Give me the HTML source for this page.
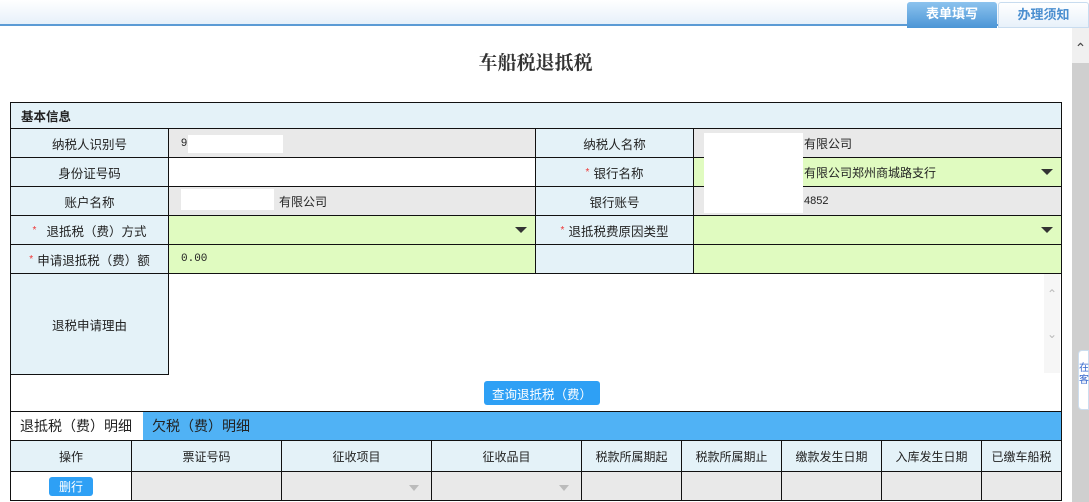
<!DOCTYPE html>
<html><head><meta charset="utf-8"><style>
*{box-sizing:border-box;margin:0;padding:0}
body{width:1089px;height:502px;overflow:hidden;background:#fff;font-family:"Liberation Sans","Noto Sans CJK SC",sans-serif;font-size:12px;color:#222;position:relative}
.abs{position:absolute}
.top{left:0;top:0;width:1089px;height:26px;background:linear-gradient(#fff,#e6f0fa);border-bottom:2px solid #5b9bd5}
.tab{top:2px;height:26px;line-height:24px;text-align:center;font-size:13px;font-weight:bold;border-radius:3px 3px 0 0}
.sb{left:1072px;top:28px;width:17px;height:474px;background:#cfcfcf}
.cell{position:absolute;border:1px solid #111;display:flex;align-items:center}
.lab{background:#e4f2f8;justify-content:center;font-size:12.5px}
.g{background:#e9e9e9}.gr{background:#e0fbc0}.w{background:#fff}
.st{color:#e33;font-size:10px;margin-right:4px}
.tri{position:absolute;right:8px;width:0;height:0;border-left:6px solid transparent;border-right:6px solid transparent;border-top:6px solid #333}
.wb{position:absolute;background:#fff}
.hd{background:#e4f2f8;justify-content:center;font-size:12px}
.btn{background:#2ea0f5;color:#fff;border-radius:3px;display:flex;align-items:center;justify-content:center}
</style></head><body>
<div class="abs top"></div>
<div class="abs tab" style="left:907px;width:90px;background:linear-gradient(#8cc3ee,#4b95d6);color:#fff">表单填写</div>
<div class="abs tab" style="left:998px;width:91px;background:linear-gradient(#fff,#e8f1fa);color:#4b8fd0;border:1px solid #c8dcef">办理须知</div>
<div class="abs sb"><div style="height:35px;background:#f0f0f0;text-align:center;font-size:14px;color:#444;line-height:40px">⌃</div></div>
<div class="abs" style="left:1078px;top:350px;width:11px;height:60px;background:#fff;border:1px solid #cde;border-radius:4px 0 0 4px;font-size:10px;color:#36c;line-height:12px;padding-top:12px">在客</div>
<div class="abs" style="left:0;top:48px;width:1071px;text-align:center;font-size:19px;font-weight:bold;color:#333;font-family:'Noto Serif CJK SC',serif">车船税退抵税</div>

<div class="cell" style="left:10px;top:102px;width:1052px;height:27px;background:#e4f2f8;padding-left:10px;font-weight:bold;font-size:12.5px">基本信息</div>

<div class="cell lab" style="left:10px;top:128px;width:159px;height:30px">纳税人识别号</div>
<div class="cell g" style="left:168px;top:128px;width:368px;height:30px;padding-left:12px;font-size:11px">91<span class="wb" style="left:19px;top:6px;width:95px;height:18px"></span></div>
<div class="cell lab" style="left:535px;top:128px;width:159px;height:30px">纳税人名称</div>
<div class="cell g" style="left:693px;top:128px;width:369px;height:30px;padding-left:110px">有限公司</div>

<div class="cell lab" style="left:10px;top:157px;width:159px;height:30px">身份证号码</div>
<div class="cell w" style="left:168px;top:157px;width:368px;height:30px"></div>
<div class="cell lab" style="left:535px;top:157px;width:159px;height:30px"><span class="st">*</span>银行名称</div>
<div class="cell gr" style="left:693px;top:157px;width:369px;height:30px;padding-left:110px">有限公司郑州商城路支行<span class="tri"></span></div>

<div class="cell lab" style="left:10px;top:186px;width:159px;height:30px">账户名称</div>
<div class="cell g" style="left:168px;top:186px;width:368px;height:30px;padding-left:110px">有限公司<span class="wb" style="left:12px;top:2px;width:93px;height:21px"></span></div>
<div class="cell lab" style="left:535px;top:186px;width:159px;height:30px">银行账号</div>
<div class="cell g" style="left:693px;top:186px;width:369px;height:30px;padding-left:110px;font-size:11px">4852</div>

<div class="cell lab" style="left:10px;top:215px;width:159px;height:30px"><span class="st" style="margin-right:10px">*</span>退抵税（费）方式</div>
<div class="cell gr" style="left:168px;top:215px;width:368px;height:30px"><span class="tri"></span></div>
<div class="cell lab" style="left:535px;top:215px;width:159px;height:30px"><span class="st">*</span>退抵税费原因类型</div>
<div class="cell gr" style="left:693px;top:215px;width:369px;height:30px"><span class="tri"></span></div>

<div class="cell lab" style="left:10px;top:244px;width:159px;height:30px"><span class="st">*</span>申请退抵税（费）额</div>
<div class="cell gr" style="left:168px;top:244px;width:368px;height:30px;padding-left:12px;font-size:11px;font-family:'Liberation Mono',monospace">0.00</div>
<div class="cell lab" style="left:535px;top:244px;width:159px;height:30px"></div>
<div class="cell gr" style="left:693px;top:244px;width:369px;height:30px"></div>

<div class="wb" style="left:704px;top:133px;width:99px;height:80px"></div>

<div class="abs" style="left:10px;top:273px;width:1052px;height:139px;border-left:1px solid #111;border-right:1px solid #111"></div>
<div class="cell lab" style="left:10px;top:273px;width:159px;height:102px">退税申请理由</div>
<div class="abs" style="left:1044px;top:274px;width:16px;height:99px;background:#f6f6f6;color:#bbb;font-size:12px;text-align:center;line-height:40px">⌃<br>⌄</div>
<div class="abs btn" style="left:484px;top:381px;width:116px;height:24px;font-size:12.5px">查询退抵税（费）</div>

<div class="abs" style="left:10px;top:411px;width:1052px;height:30px;background:#50b2f5;border:1px solid #111;border-bottom:none"></div>
<div class="abs" style="left:11px;top:412px;width:132px;height:29px;background:#fff;font-size:14px;line-height:29px;padding-left:9px">退抵税（费）明细</div>
<div class="abs" style="left:152px;top:412px;font-size:14px;line-height:29px">欠税（费）明细</div>

<div class="cell hd" style="left:10px;top:440px;width:122px;height:32px">操作</div>
<div class="cell hd" style="left:131px;top:440px;width:151px;height:32px">票证号码</div>
<div class="cell hd" style="left:281px;top:440px;width:151px;height:32px">征收项目</div>
<div class="cell hd" style="left:431px;top:440px;width:151px;height:32px">征收品目</div>
<div class="cell hd" style="left:581px;top:440px;width:101px;height:32px">税款所属期起</div>
<div class="cell hd" style="left:681px;top:440px;width:101px;height:32px">税款所属期止</div>
<div class="cell hd" style="left:781px;top:440px;width:101px;height:32px">缴款发生日期</div>
<div class="cell hd" style="left:881px;top:440px;width:101px;height:32px">入库发生日期</div>
<div class="cell hd" style="left:981px;top:440px;width:81px;height:32px;overflow:hidden;white-space:nowrap">已缴车船税</div>

<div class="cell w" style="left:10px;top:471px;width:122px;height:30px;justify-content:center"><span class="btn" style="width:44px;height:19px;font-size:12px">删行</span></div>
<div class="cell g" style="left:131px;top:471px;width:151px;height:30px"></div>
<div class="cell g" style="left:281px;top:471px;width:151px;height:30px"><span class="tri" style="border-top-color:#bbb;border-left-width:5px;border-right-width:5px;right:12px;top:13px"></span></div>
<div class="cell g" style="left:431px;top:471px;width:151px;height:30px"><span class="tri" style="border-top-color:#bbb;border-left-width:5px;border-right-width:5px;right:12px;top:13px"></span></div>
<div class="cell g" style="left:581px;top:471px;width:101px;height:30px"></div>
<div class="cell g" style="left:681px;top:471px;width:101px;height:30px"></div>
<div class="cell g" style="left:781px;top:471px;width:101px;height:30px"></div>
<div class="cell g" style="left:881px;top:471px;width:101px;height:30px"></div>
<div class="cell g" style="left:981px;top:471px;width:81px;height:30px"></div>
</body></html>
